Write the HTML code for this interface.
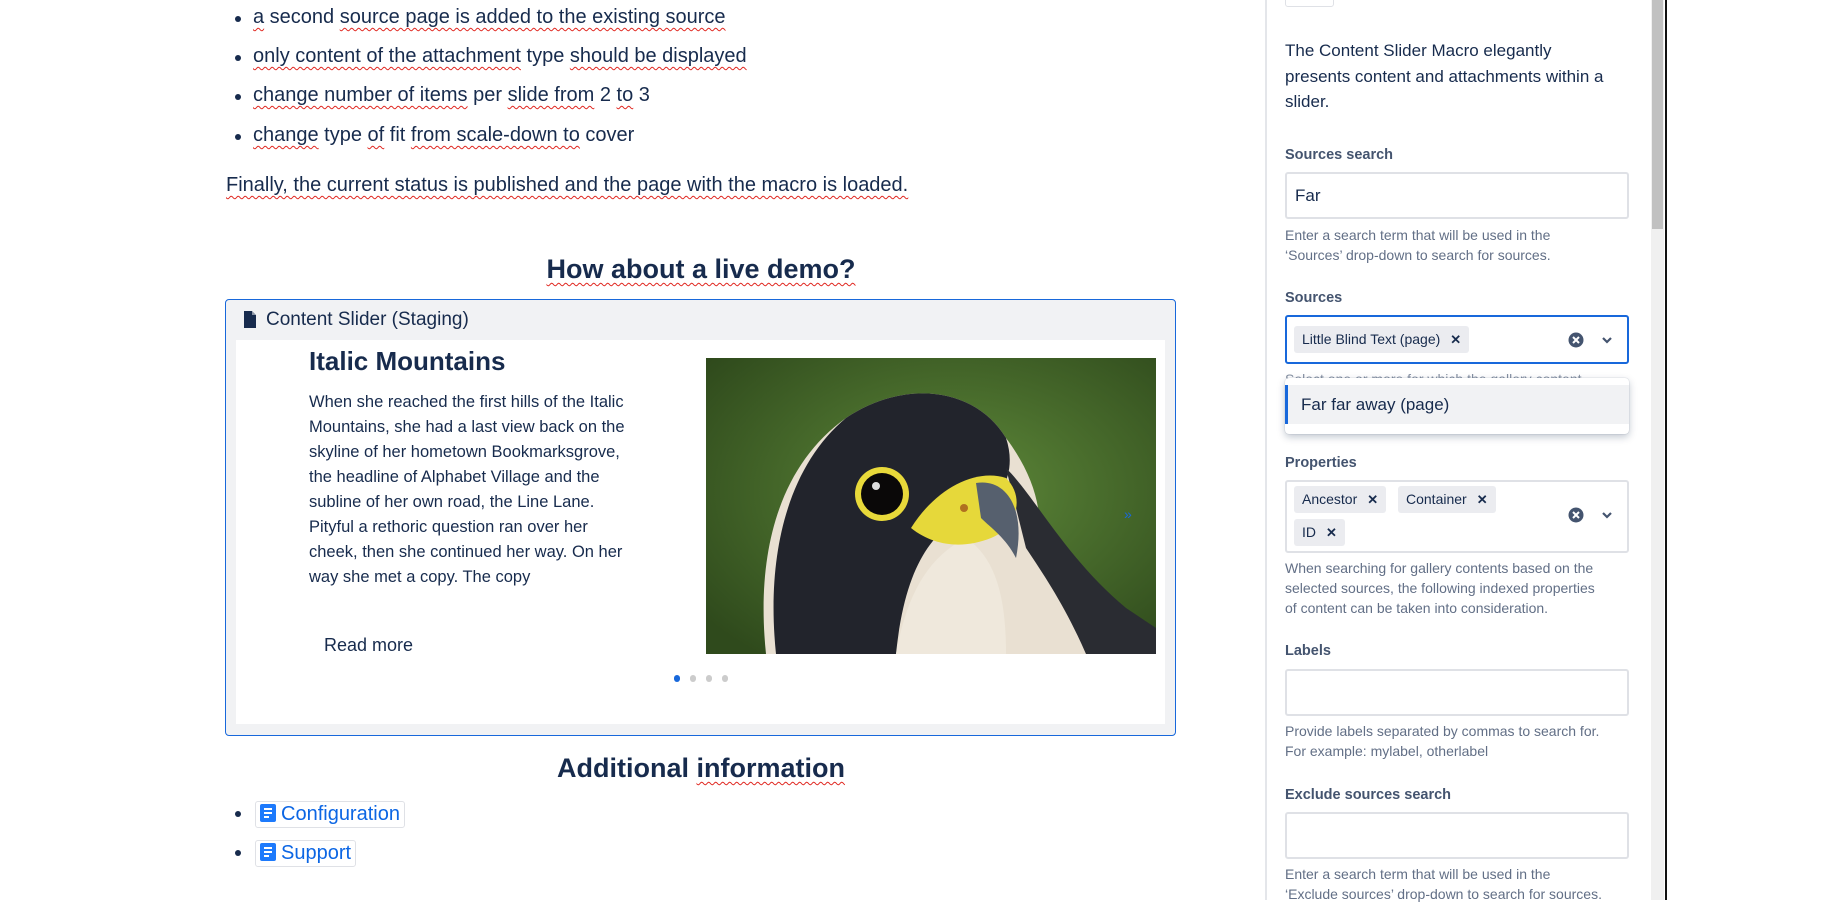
<!DOCTYPE html>
<html><head><meta charset="utf-8"><style>
*{box-sizing:border-box;margin:0;padding:0}
body{width:1840px;height:900px;overflow:hidden;background:#fff;font-family:"Liberation Sans",sans-serif;color:#172b4d;position:relative}
.a{position:absolute;white-space:nowrap}
.sp{text-decoration:underline wavy #e0261f;text-decoration-thickness:1px;text-underline-offset:4px}
.li{font-size:20px}
.dot{position:absolute;width:6px;height:6px;border-radius:50%;background:#172b4d}
.lbl{position:absolute;left:1285px;font-size:14.5px;font-weight:bold;color:#44546f}
.inp{position:absolute;left:1285px;width:344px;border:2px solid #dfe1e6;border-radius:3px;background:#fff}
.help{position:absolute;left:1285px;font-size:14px;color:#626f86;line-height:20px}
.chip{position:absolute;background:#ebecf0;border-radius:3px;font-size:14px;height:27px;line-height:27px;padding:0 8px;color:#172b4d}
.chip b{margin-left:10px;font-size:13px}
</style></head><body>
<div class="dot" style="left:235px;top:16px"></div>
<div class="a li" style="left:253px;top:6px"><span class="sp">a</span> second <span class="sp">source page is added to the existing source</span></div>
<div class="dot" style="left:235px;top:55px"></div>
<div class="a li" style="left:253px;top:45px"><span class="sp">only content of the attachment</span> type <span class="sp">should be displayed</span></div>
<div class="dot" style="left:235px;top:94px"></div>
<div class="a li" style="left:253px;top:84px"><span class="sp">change number of items</span> per <span class="sp">slide from</span> 2 <span class="sp">to</span> 3</div>
<div class="dot" style="left:235px;top:134px"></div>
<div class="a li" style="left:253px;top:124px"><span class="sp">change</span> type <span class="sp">of</span> fit <span class="sp">from scale-down to</span> cover</div>
<div class="a li" style="left:226px;top:174px"><span class="sp">Finally, the current status is published and the page with the macro is loaded.</span></div>

<div class="a" style="left:0;width:1402px;text-align:center;top:254px;font-size:27px;font-weight:bold"><span class="sp">How about a live demo?</span></div>

<div class="a" style="left:225px;top:299px;width:951px;height:437px;border:1.5px solid #1868db;border-radius:4px;background:#f1f2f4"></div>
<svg class="a" style="left:243px;top:311px" width="14" height="17" viewBox="0 0 14 17"><path d="M1 0h8l4 4v13H1z" fill="#172b4d"/><path d="M9 0v4h4" fill="#fff" opacity=".5"/></svg>
<div class="a" style="left:266px;top:309px;font-size:19px">Content Slider (Staging)</div>
<div class="a" style="left:236px;top:340px;width:929px;height:384px;background:#fff"></div>
<div class="a" style="left:309px;top:346px;font-size:26px;font-weight:bold">Italic Mountains</div>
<div class="a" style="left:309px;top:390px;font-size:16.5px;line-height:25px;white-space:normal;width:325px">When she reached the first hills of the Italic Mountains, she had a last view back on the skyline of her hometown Bookmarksgrove, the headline of Alphabet Village and the subline of her own road, the Line Lane. Pityful a rethoric question ran over her cheek, then she continued her way. On her way she met a copy. The copy</div>
<div class="a" style="left:324px;top:635px;font-size:18px">Read more</div>
<svg class="a" style="left:706px;top:358px" width="450" height="296" viewBox="0 0 450 296">
<defs><radialGradient id="g" cx=".55" cy=".45" r=".7"><stop offset="0" stop-color="#5f8a3a"/><stop offset="1" stop-color="#2f4a1c"/></radialGradient></defs>
<rect width="450" height="296" fill="url(#g)"/>
<path d="M60 296 C50 200 70 110 140 60 C200 20 270 30 300 80 C330 120 340 160 330 200 L360 230 C400 260 430 280 450 290 V296Z" fill="#e9e0d2"/>
<path d="M70 296 C60 200 80 110 140 60 C200 20 270 30 300 80 C310 110 300 140 270 150 C230 170 200 200 190 296Z" fill="#22242c"/>
<path d="M300 110 C330 140 360 200 420 250 L450 270 V296 H380 C360 250 340 220 320 190Z" fill="#2a2c32"/>
<path d="M190 296 C200 240 220 200 260 180 C290 200 300 240 300 296Z" fill="#efe8dc"/>
<path d="M205 170 C230 130 270 110 300 120 C320 140 310 170 285 180 C260 190 230 190 205 170Z" fill="#e6d83a"/>
<path d="M270 125 C300 120 320 150 310 200 C300 180 285 170 275 160Z" fill="#56606e"/>
<circle cx="176" cy="136" r="27" fill="#e8d93a"/><circle cx="176" cy="136" r="21" fill="#0a0808"/><circle cx="170" cy="128" r="4" fill="#ddd"/>
<circle cx="258" cy="150" r="4" fill="#b07020"/>
</svg>
<div class="a" style="left:1124px;top:506px;color:#1868db;font-size:14px">»</div>
<div class="a" style="left:674px;top:675px;width:6px;height:7px;border-radius:3px;background:#1868db"></div>
<div class="a" style="left:690px;top:675px;width:6px;height:7px;border-radius:3px;background:#ccc"></div>
<div class="a" style="left:706px;top:675px;width:6px;height:7px;border-radius:3px;background:#ccc"></div>
<div class="a" style="left:722px;top:675px;width:6px;height:7px;border-radius:3px;background:#ccc"></div>

<div class="a" style="left:0;width:1402px;text-align:center;top:753px;font-size:27px;font-weight:bold">Additional <span class="sp">information</span></div>
<div class="dot" style="left:235px;top:811px"></div>
<div class="a" style="left:255px;top:801px;height:27px;padding:0 4px;border:1px solid #dfe1e6;border-radius:3px;font-size:20px;line-height:25px;color:#0c66e4"><svg width="16" height="18" viewBox="0 0 16 18" style="vertical-align:-2px;margin-right:5px"><rect width="16" height="18" rx="2" fill="#1d7afc"/><path d="M4 5h8M4 9h8M4 13h5" stroke="#fff" stroke-width="2"/></svg>Configuration</div>
<div class="dot" style="left:235px;top:850px"></div>
<div class="a" style="left:255px;top:840px;height:27px;padding:0 4px;border:1px solid #dfe1e6;border-radius:3px;font-size:20px;line-height:25px;color:#0c66e4"><svg width="16" height="18" viewBox="0 0 16 18" style="vertical-align:-2px;margin-right:5px"><rect width="16" height="18" rx="2" fill="#1d7afc"/><path d="M4 5h8M4 9h8M4 13h5" stroke="#fff" stroke-width="2"/></svg>Support</div>

<!-- panel -->
<div class="a" style="left:1265px;top:0;width:2px;height:900px;background:#e4e6ea"></div>
<div class="a" style="left:1651px;top:0;width:13px;height:900px;background:#f0f0f0"></div>
<div class="a" style="left:1652px;top:0;width:11px;height:229px;background:#c1c1c1"></div>
<div class="a" style="left:1665px;top:0;width:2px;height:900px;background:#111"></div>
<div class="a" style="left:1285px;top:-3px;width:49px;height:10px;border:1px solid #dfe1e6;border-radius:3px"></div>
<div class="a" style="left:1285px;top:38px;font-size:17px;line-height:25.5px;white-space:normal;width:325px">The Content Slider Macro elegantly presents content and attachments within a slider.</div>

<div class="lbl" style="top:147px">Sources search</div>
<div class="inp" style="top:172px;height:47px;font-size:17px;line-height:43px;padding-left:8px">Far</div>
<div class="help" style="top:225px">Enter a search term that will be used in the<br>‘Sources’ drop-down to search for sources.</div>

<div class="lbl" style="top:290px">Sources</div>
<div class="inp" style="top:315px;height:49px;border-color:#1868db"></div>
<div class="chip" style="left:1294px;top:326px">Little Blind Text (page)<b>✕</b></div>
<svg class="a" style="left:1568px;top:332px" width="16" height="16" viewBox="0 0 16 16"><circle cx="8" cy="8" r="7.5" fill="#44546f"/><path d="M5 5l6 6M11 5l-6 6" stroke="#fff" stroke-width="2"/></svg>
<svg class="a" style="left:1600px;top:335px" width="14" height="10" viewBox="0 0 14 10"><path d="M3 3l4 4 4-4" stroke="#44546f" stroke-width="2.2" fill="none"/></svg>
<div class="help" style="top:369px;color:#8590a2">Select one or more for which the gallery content</div>
<div class="a" style="left:1285px;top:378px;width:344px;height:56px;background:#fff;border-radius:4px;box-shadow:0 3px 8px rgba(9,30,66,.25),0 0 1px rgba(9,30,66,.3)"></div>
<div class="a" style="left:1285px;top:385px;width:344px;height:39px;background:#f1f2f4;border-left:3px solid #1868db;font-size:17px;line-height:39px;padding-left:13px">Far far away (page)</div>

<div class="lbl" style="top:455px">Properties</div>
<div class="inp" style="top:480px;height:73px"></div>
<div class="chip" style="left:1294px;top:486px">Ancestor<b>✕</b></div>
<div class="chip" style="left:1398px;top:486px">Container<b>✕</b></div>
<div class="chip" style="left:1294px;top:519px">ID<b>✕</b></div>
<svg class="a" style="left:1568px;top:507px" width="16" height="16" viewBox="0 0 16 16"><circle cx="8" cy="8" r="7.5" fill="#44546f"/><path d="M5 5l6 6M11 5l-6 6" stroke="#fff" stroke-width="2"/></svg>
<svg class="a" style="left:1600px;top:510px" width="14" height="10" viewBox="0 0 14 10"><path d="M3 3l4 4 4-4" stroke="#44546f" stroke-width="2.2" fill="none"/></svg>
<div class="help" style="top:558px">When searching for gallery contents based on the<br>selected sources, the following indexed properties<br>of content can be taken into consideration.</div>

<div class="lbl" style="top:643px">Labels</div>
<div class="inp" style="top:669px;height:47px"></div>
<div class="help" style="top:721px">Provide labels separated by commas to search for.<br>For example: mylabel, otherlabel</div>

<div class="lbl" style="top:787px">Exclude sources search</div>
<div class="inp" style="top:812px;height:47px"></div>
<div class="help" style="top:864px">Enter a search term that will be used in the<br>‘Exclude sources’ drop-down to search for sources.</div>
</body></html>
